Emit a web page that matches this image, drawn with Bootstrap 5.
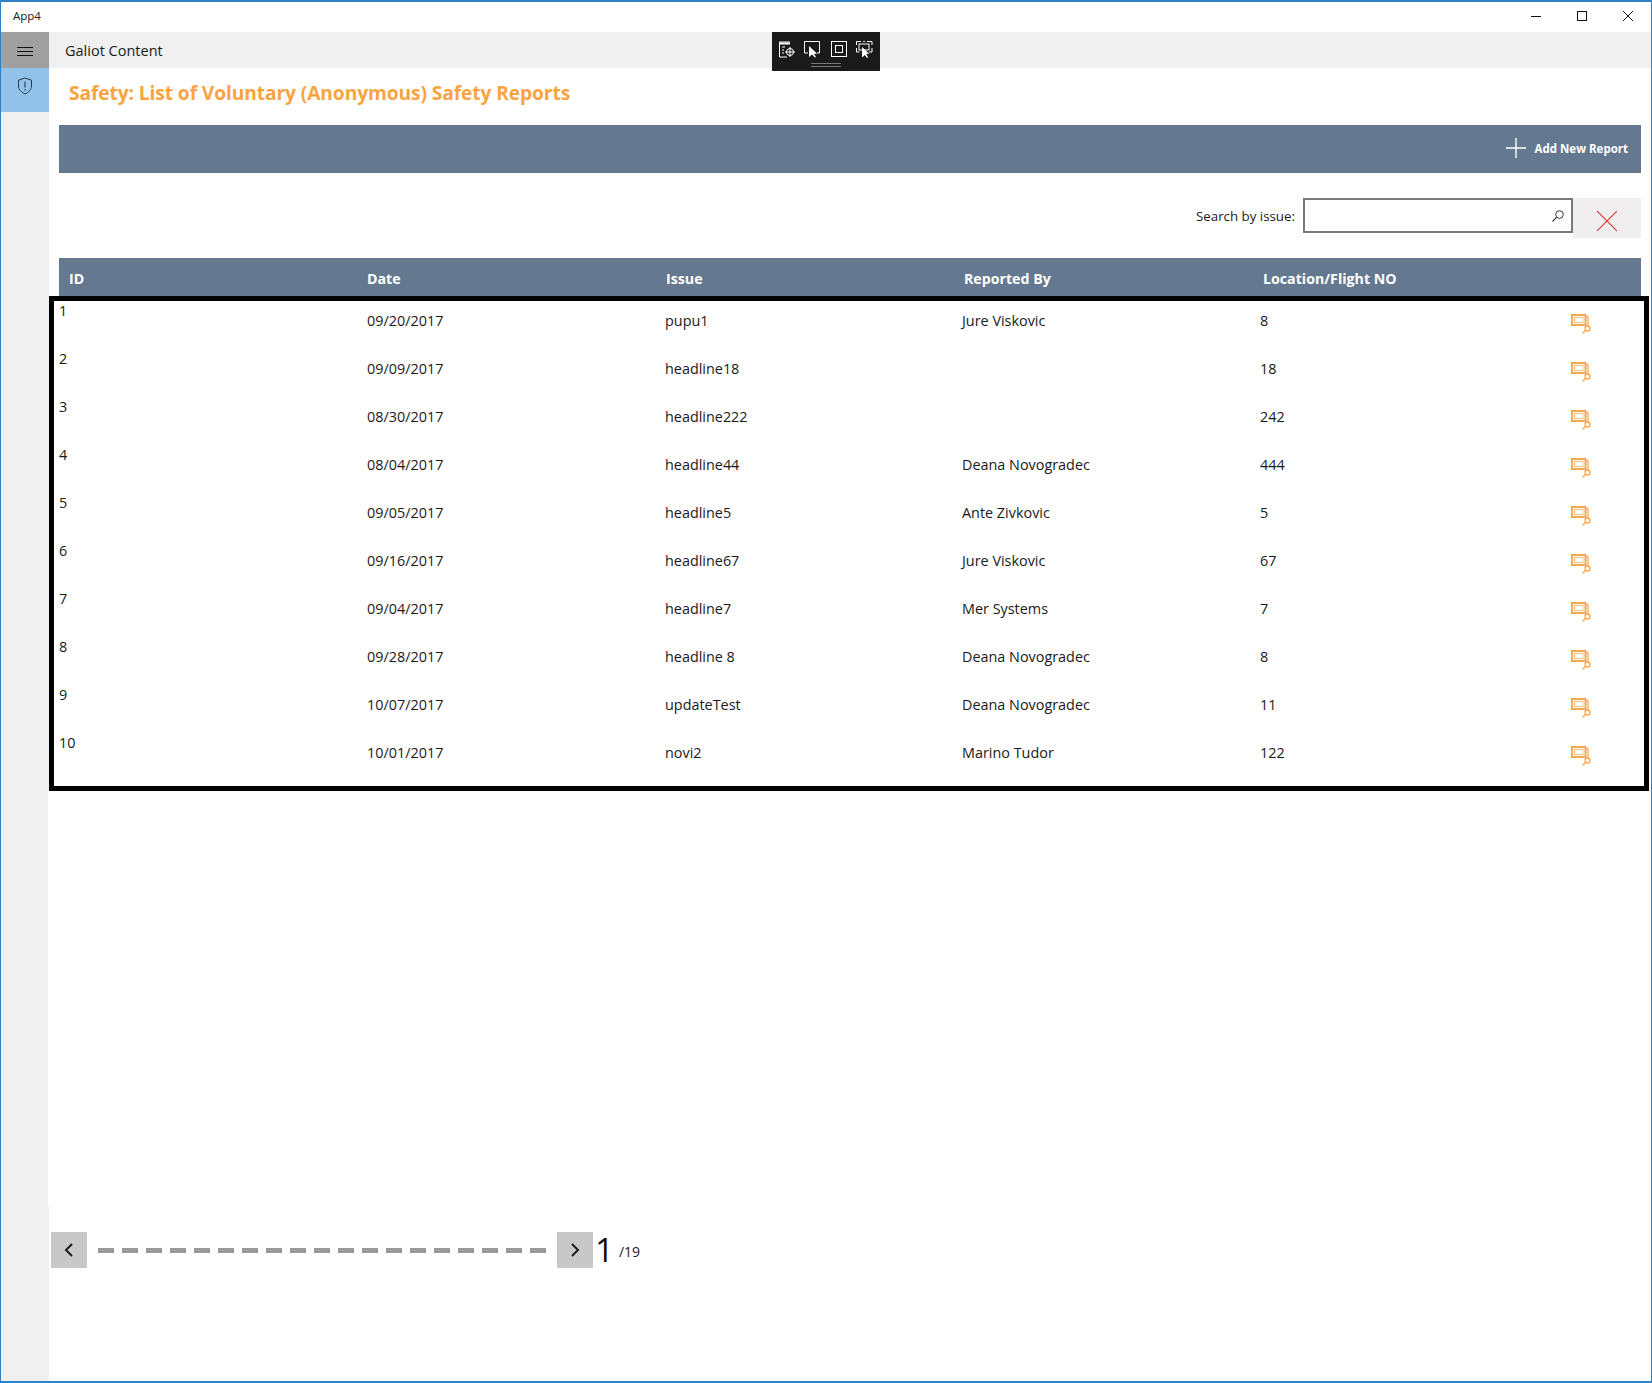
<!DOCTYPE html>
<html lang="en">
<head>
<meta charset="utf-8">
<title>App4</title>
<link rel="stylesheet" href="https://cdn.jsdelivr.net/npm/bootstrap@5.3.0/dist/css/bootstrap.min.css">
<style>
html,body{margin:0;background:#fff}
body{font-family:"Open Sans","Noto Sans",sans-serif;font-size:14.4px;line-height:20px;color:#1a1a1a}
.app-win{width:1652px;height:1383px;border:1px solid #2f81c4;border-top-width:2px;border-bottom-width:2px;position:relative;overflow:hidden}
.app-title{height:30px;padding-left:12px;padding-bottom:2px;font-size:11.5px}
.app-ctrl{width:46px;height:28px}
.app-main{height:1349px}
.app-side{width:48px;background:#f0f0f0;flex:none}
.app-burger{height:36px;background:#a0a0a0;padding-top:3px}
.app-shield{height:44px;background:#92c1e9;padding-top:9px}
.app-content{min-width:0}
.app-top{height:36px;background:#f0f0f0;padding-left:16px;padding-top:2px;font-size:14.5px}
.app-tools{position:absolute;left:771px;top:30px;width:108px;height:39px;background:#1a1a1a;padding:9px 7px 0 7px}
.app-grip{position:absolute;left:39px;top:31px;width:30px;height:4px;border-top:1px solid #777;border-bottom:1px solid #777}
.page-head{height:57px;padding:13px 0 0 20px;font-size:19.2px;line-height:24px;font-weight:700;color:#f9a440;letter-spacing:-.1px}
.bar-blue{background:#64798f;color:#fff}
.add-bar{margin-left:10px;width:1582px;height:48px;font-weight:700;font-size:11.5px;padding-right:13px;line-height:20px;gap:8px}
.add-icon{margin-top:-2px;margin-right:1px}
.find-row{margin-left:10px;width:1582px;height:85px;padding-top:25px}
.find-label{font-size:13.3px;margin-right:8px;padding-top:8px}
.find-box{width:270px;height:35px;border:2px solid #7a7a7a;padding-right:6px}
.find-x{width:68px;height:40px;background:#f0eeee;padding-top:13px}
.head-row,.data-row{display:grid;grid-template-columns:298px 299px 298px 299px 1fr}
.head-row{margin-left:10px;width:1582px;height:38px;padding:11px 0 0 10px;font-weight:700;font-size:14.2px}
.data-frame{width:1600px;height:495px;border:5px solid #000;background:#fff}
.data-row{grid-template-columns:308px 298px 297px 298px 1fr 20px 53px;height:48px;padding-left:5px}
.cell-mid{padding-top:10px}
.cell-icon{padding-top:13px;line-height:0}
.side-notch{position:absolute;left:47px;top:789px;width:2px;height:415px;background:#fff}
.page-row{position:absolute;left:50px;top:1230px;height:36px}
.page-btn{width:36px;height:36px;background:#c8c8c8;border:0;padding:0}
.page-dashes{width:449px;margin:0 10px 0 11px;gap:8px}
.page-dash{width:16px;height:5px;background:#999;display:block}
.page-num{font-size:33px;line-height:36px;color:#111;margin-left:2px}
.page-total{font-size:14px;margin-left:5px;margin-top:3px}
</style>
</head>
<body>
<div class="app-win">
  <div class="d-flex align-items-center app-title">
    <span class="flex-grow-1">App4</span>
    <span class="app-ctrl d-flex align-items-center justify-content-center"><svg width="10" height="10" viewBox="0 0 10 10"><path d="M0 5.5h10" stroke="#111"/></svg></span>
    <span class="app-ctrl d-flex align-items-center justify-content-center"><svg width="10" height="10" viewBox="0 0 10 10"><rect x=".5" y=".5" width="9" height="9" fill="none" stroke="#111"/></svg></span>
    <span class="app-ctrl d-flex align-items-center justify-content-center"><svg width="10" height="10" viewBox="0 0 10 10"><path d="M0 0l10 10M10 0L0 10" stroke="#111"/></svg></span>
  </div>
  <div class="d-flex app-main">
    <div class="app-side">
      <div class="app-burger d-flex align-items-center justify-content-center"><svg width="16" height="10" viewBox="0 0 16 10"><path d="M0 .5h16M0 4.5h16M0 8.5h16" stroke="#111"/></svg></div>
      <div class="app-shield d-flex justify-content-center align-items-start"><svg width="16" height="18" viewBox="0 0 16 18"><path d="M8 1l6.5 2.2V9c0 3.6-2.8 6.2-6.5 8C4.300 15.200 1.500 12.600 1.500 9V3.200z" fill="none" stroke="#1b2b3a" stroke-width=".9"/><path d="M8 4.500v6M8 12v1.500" stroke="#1b2b3a" stroke-width="1"/></svg></div>
    </div>
    <div class="app-content flex-grow-1">
      <div class="app-top d-flex align-items-center">Galiot Content</div>
      <div class="page-head">Safety: List of Voluntary (Anonymous) Safety Reports</div>
      <div class="bar-blue add-bar d-flex align-items-center justify-content-end">
        <svg class="add-icon" width="20" height="20" viewBox="0 0 20 20"><path d="M10 0v20M0 10h20" stroke="#fff" stroke-width="1.400"/></svg>
        <span>Add New Report</span>
      </div>
      <div class="find-row d-flex justify-content-end align-items-start">
        <span class="find-label">Search by issue:</span>
        <div class="find-box d-flex align-items-center justify-content-end">
          <svg width="14" height="14" viewBox="0 0 14 14"><circle cx="8.500" cy="5.500" r="3.800" fill="none" stroke="#333"/><path d="M5.800 8.200L1.500 12.500" stroke="#333" stroke-width="1.100"/></svg>
        </div>
        <div class="find-x d-flex justify-content-center align-items-start"><svg width="20" height="20" viewBox="0 0 20 20"><path d="M0 0l20 20M20 0L0 20" stroke="#e2383c" stroke-width="1.200"/></svg></div>
      </div>
      <div class="bar-blue head-row">
        <span>ID</span><span>Date</span><span>Issue</span><span>Reported By</span><span>Location/Flight NO</span>
      </div>
      <div class="data-frame" id="rows"></div>
    </div>
  </div>

  <div class="app-tools d-flex justify-content-between">
    <svg width="16" height="17" viewBox="0 0 16 17" fill="none" stroke="#fff"><path d="M11 1H.5v15H8" /><path d="M.5 2.500H11" stroke-width="2"/><path d="M3 6h3M3 9h2M3 12h2"/><circle cx="11" cy="11" r="3.500"/><path d="M11 6v10M6 11h10" stroke-width="1"/></svg>
    <svg width="17" height="17" viewBox="0 0 17 17" fill="none"><path d="M4 12H.5V.5h15V12H13" stroke="#fff"/><path d="M5 5v11l3-2.500 3 3 1-.5-2-3 3-.5z" fill="#fff"/></svg>
    <svg width="16" height="16" viewBox="0 0 16 16" fill="none" stroke="#fff"><rect x=".5" y=".5" width="15" height="15"/><rect x="4.500" y="4.500" width="7" height="7"/></svg>
    <svg width="17" height="17" viewBox="0 0 17 17" fill="none"><path d="M.5 4V.5H5M11 .5h5V4M.5 7v4h3M16 7v4h-3M7 .5h2" stroke="#fff"/><rect x="3" y="3" width="10" height="6" stroke="#fff"/><path d="M6 6v10.500l2.800-2.500 2.200 3 1.200-.8-2-3 3-.5z" fill="#fff"/></svg>
    <span class="app-grip"></span>
  </div>

  <span class="side-notch"></span>

  <div class="page-row d-flex align-items-start">
    <button class="page-btn d-flex align-items-center justify-content-center" type="button" aria-label="Previous"><svg width="10" height="14" viewBox="0 0 10 14"><path d="M8 1L2 7l6 6" fill="none" stroke="#1c1c1c" stroke-width="2"/></svg></button>
    <div class="page-dashes d-flex align-items-center align-self-stretch" id="dashes"></div>
    <button class="page-btn d-flex align-items-center justify-content-center" type="button" aria-label="Next"><svg width="10" height="14" viewBox="0 0 10 14"><path d="M2 1l6 6-6 6" fill="none" stroke="#1c1c1c" stroke-width="2"/></svg></button>
    <span class="page-num">1</span>
    <span class="page-total align-self-center">/19</span>
  </div>
</div>
<script>
var data=[["1","09/20/2017","pupu1","Jure Viskovic","8"],["2","09/09/2017","headline18","","18"],["3","08/30/2017","headline222","","242"],["4","08/04/2017","headline44","Deana Novogradec","444"],["5","09/05/2017","headline5","Ante Zivkovic","5"],["6","09/16/2017","headline67","Jure Viskovic","67"],["7","09/04/2017","headline7","Mer Systems","7"],["8","09/28/2017","headline 8","Deana Novogradec","8"],["9","10/07/2017","updateTest","Deana Novogradec","11"],["10","10/01/2017","novi2","Marino Tudor","122"]];
var icon='<svg width="20" height="20" viewBox="0 0 20 20" fill="none" stroke="#f6a850"><path d="M14.500 2.500h2.500v9H3.500V11" stroke-width="1.200"/><rect x="1" y="1" width="13.500" height="10" stroke-width="2"/><rect x="3.500" y="3.500" width="8.500" height="5" stroke-opacity=".7"/><circle cx="16.500" cy="14.500" r="2.500" stroke-width="1.300"/><path d="M14.800 16.300L11.500 19.500" stroke-width="1.300"/></svg>';
document.getElementById('rows').innerHTML=data.map(function(r){return '<div class="data-row"><span>'+r[0]+'</span><span class="cell-mid">'+r[1]+'</span><span class="cell-mid">'+r[2]+'</span><span class="cell-mid">'+r[3]+'</span><span class="cell-mid">'+r[4]+'</span><span class="cell-icon">'+icon+'</span><span></span></div>'}).join('');
var d='';for(var i=0;i<19;i++)d+='<span class="page-dash"></span>';document.getElementById('dashes').innerHTML=d;
</script>
</body>
</html>
